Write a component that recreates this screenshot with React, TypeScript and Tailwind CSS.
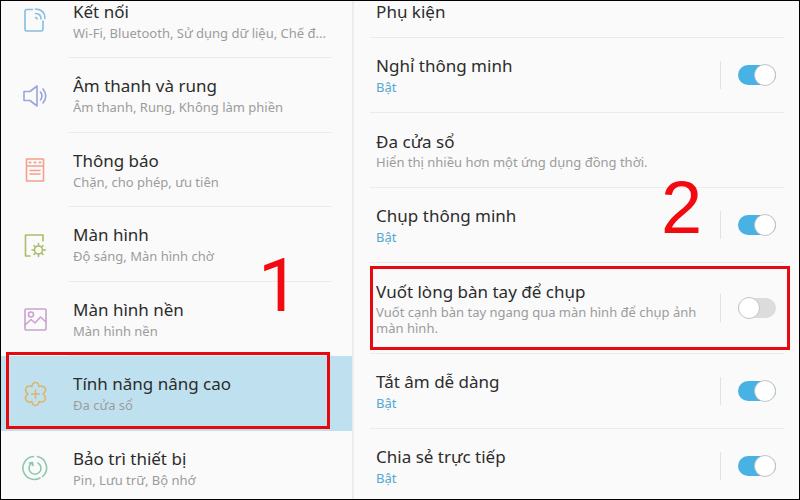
import type { ReactNode } from "react";

type MenuItem = {
    title: string;
    detail: string;
    icon: ReactNode;
    selected?: boolean;
};

type Option = {
    title: string;
    detail?: string;
    on?: boolean;
    marked?: boolean;
};

const menu: MenuItem[] = [
    {
        title: "Kết nối",
        detail: "Wi-Fi, Bluetooth, Sử dụng dữ liệu, Chế đ...",
        icon: (
            <g stroke="#86bde0">
                <path d="M11.500 2.500H6Q4 2.500 4 4.500V22q0 2 2 2h14q2 0 2-2V14" />
                <path d="M14.500 10.500q1.500 0 1.500 1.500M14.500 6.500q5.500 0 5.500 5.500M14.500 2q9.500.5 9.500 9.500" />
            </g>
        ),
    },
    {
        title: "Âm thanh và rung",
        detail: "Âm thanh, Rung, Không làm phiền",
        icon: (
            <g stroke="#9aa5dc">
                <path d="M3 9.500h6L16 4v20l-7-5.500H3z" />
                <path d="M19.500 10q3 4 0 8M22 7q5.500 7 0 14" />
            </g>
        ),
    },
    {
        title: "Thông báo",
        detail: "Chặn, cho phép, ưu tiên",
        icon: (
            <g stroke="#f4a08c">
                <path d="M5.500 3h17v22h-17zM5.500 10h17M9 14.500h10M9 18h10" />
                <path d="M8.500 6.500h1M13.500 6.500h1M18.500 6.500h1" strokeWidth="2" />
            </g>
        ),
    },
    {
        title: "Màn hình",
        detail: "Độ sáng, Màn hình chờ",
        icon: (
            <g stroke="#a9be6a">
                <path d="M9 25H4.500V4H22v6" />
                <circle cx="17.500" cy="19" r="4" />
                <path d="M17.500 12.500v2M17.500 23.500v2M11 19h2M22 19h2.500M13 14.500l1.500 1.500M20.500 22l1.500 1.500M13 23.500l1.500-1.500M20.500 16l1.500-1.500" />
            </g>
        ),
    },
    {
        title: "Màn hình nền",
        detail: "Màn hình nền",
        icon: (
            <g stroke="#c9a3cf">
                <rect x="4" y="4" width="21" height="21" rx="1" />
                <circle cx="10" cy="9.500" r="2.500" />
                <path d="M4 20l6-5.500 4 3.500 5.500-6L25 17" />
            </g>
        ),
    },
    {
        title: "Tính năng nâng cao",
        detail: "Đa cửa sổ",
        selected: true,
        icon: (
            <g stroke="#deb468">
                <path d="M11 6.500Q11.500 2.500 14.500 2.500T18 6.500Q22 5 24 8T22 14Q25.500 17 24 20T18 21.500Q17.500 25.500 14.500 25.500T11 21.500Q7 23 5 20T7 14Q3.500 11 5 8T11 6.500z" />
                <path d="M14.500 10v8M10.500 14h8" />
            </g>
        ),
    },
    {
        title: "Bảo trì thiết bị",
        detail: "Pin, Lưu trữ, Bộ nhớ",
        icon: (
            <g stroke="#8cc8ae">
                <path d="M16.500 2.500a11.500 11.500 0 0 1 5 20M19 24a11.500 11.500 0 1 1-6.500-21.500" />
                <path d="M17 9a6 6 0 1 1-6 0M8.500 9l3-.5.5 3" />
            </g>
        ),
    },
];

const options: Option[] = [
    { title: "Phụ kiện" },
    { title: "Nghỉ thông minh", detail: "Bật", on: true },
    { title: "Đa cửa sổ", detail: "Hiển thị nhiều hơn một ứng dụng đồng thời." },
    { title: "Chụp thông minh", detail: "Bật", on: true },
    {
        title: "Vuốt lòng bàn tay để chụp",
        detail: "Vuốt cạnh bàn tay ngang qua màn hình để chụp ảnh màn hình.",
        on: false,
        marked: true,
    },
    { title: "Tắt âm dễ dàng", detail: "Bật", on: true },
    { title: "Chia sẻ trực tiếp", detail: "Bật", on: true },
];

function MenuRow({ title, detail, icon, selected }: MenuItem) {
    return (
        <li className={`relative flex odd:min-h-[74px] even:min-h-[75px] ${selected ? "bg-[#bfe1ef]" : ""}`}>
            <a href="#" className="flex min-w-0 flex-1 pl-5" aria-current={selected ? "page" : undefined}>
                <svg viewBox="0 0 28 28" className="size-7 shrink-0 self-center" fill="none" strokeWidth="1.6" strokeLinecap="round" strokeLinejoin="round" aria-hidden="true">
                    {icon}
                </svg>
                <span className={`mr-5 ml-[19px] flex min-w-0 flex-1 flex-col justify-center border-b pl-[5px] ${selected ? "border-transparent" : "border-[#ebebeb]"}`}>
                    <span className="truncate text-[17px] leading-6 text-[#2c2c2c]">{title}</span>
                    <span className="truncate text-[13px] leading-[18px] text-[#9c9c9c]">{detail}</span>
                </span>
            </a>
            {selected && <span className="pointer-events-none absolute -top-1 right-[22px] bottom-[2px] left-[5px] border-3 border-[#e60a10]" />}
        </li>
    );
}

function OptionRow({ title, detail, on, marked }: Option) {
    const id = title.replaceAll(" ", "-");
    const height = marked ? "min-h-[91px] items-center" : detail ? "min-h-[75px] items-center" : "min-h-[38px] items-start";
    return (
        <li className={`relative mr-[15px] ml-4 flex border-b border-[#ebebeb] pl-[6px] ${height}`}>
            <label htmlFor={on === undefined ? undefined : id} className="flex-1 pr-3">
                <span className="block text-[17px] leading-6 text-[#2c2c2c]">{title}</span>
                {detail && (
                    <span className={`block text-[13px] ${on ? "leading-[18px] text-[#55a9d0]" : "leading-4 text-[#9c9c9c]"}`}>{detail}</span>
                )}
            </label>
            {on !== undefined && (
                <span className="flex h-7 items-center border-l border-[#e2e2e2] pr-2 pl-[17px]">
                    <input
                        id={id}
                        type="checkbox"
                        role="switch"
                        defaultChecked={on}
                        className="relative h-5 w-[38px] appearance-none rounded-full bg-[#dcdcdc] before:absolute before:-top-px before:left-0 before:size-[22px] before:rounded-full before:border before:border-[#c4c4c4] before:bg-white checked:bg-[#49b2e4] checked:before:left-4"
                    />
                </span>
            )}
            {marked && <span className="pointer-events-none absolute top-[3px] -right-[6px] bottom-[3px] left-0 border-3 border-[#e60a10]" />}
        </li>
    );
}

export default function App() {
    return (
        <main className="relative flex h-screen overflow-hidden border border-black bg-[#fafafa] font-['Noto_Sans',sans-serif]">
            <nav className="w-[44%] shrink-0">
                <ul className="-mt-[17px]">
                    {menu.map((item) => (
                        <MenuRow key={item.title} {...item} />
                    ))}
                </ul>
            </nav>
            <section className="min-w-0 flex-1 border-l-2 border-[#ececec]">
                <ul className="-mt-px">
                    {options.map((option) => (
                        <OptionRow key={option.title} {...option} />
                    ))}
                </ul>
            </section>
            <span className="absolute top-[249px] left-[257px] font-[Roboto,sans-serif] text-[74px] leading-[72px] text-[#f20a10]">1</span>
            <span className="absolute top-[171px] left-[660px] font-['Liberation_Sans',sans-serif] text-[74px] leading-[72px] text-[#f20a10]">2</span>
        </main>
    );
}
